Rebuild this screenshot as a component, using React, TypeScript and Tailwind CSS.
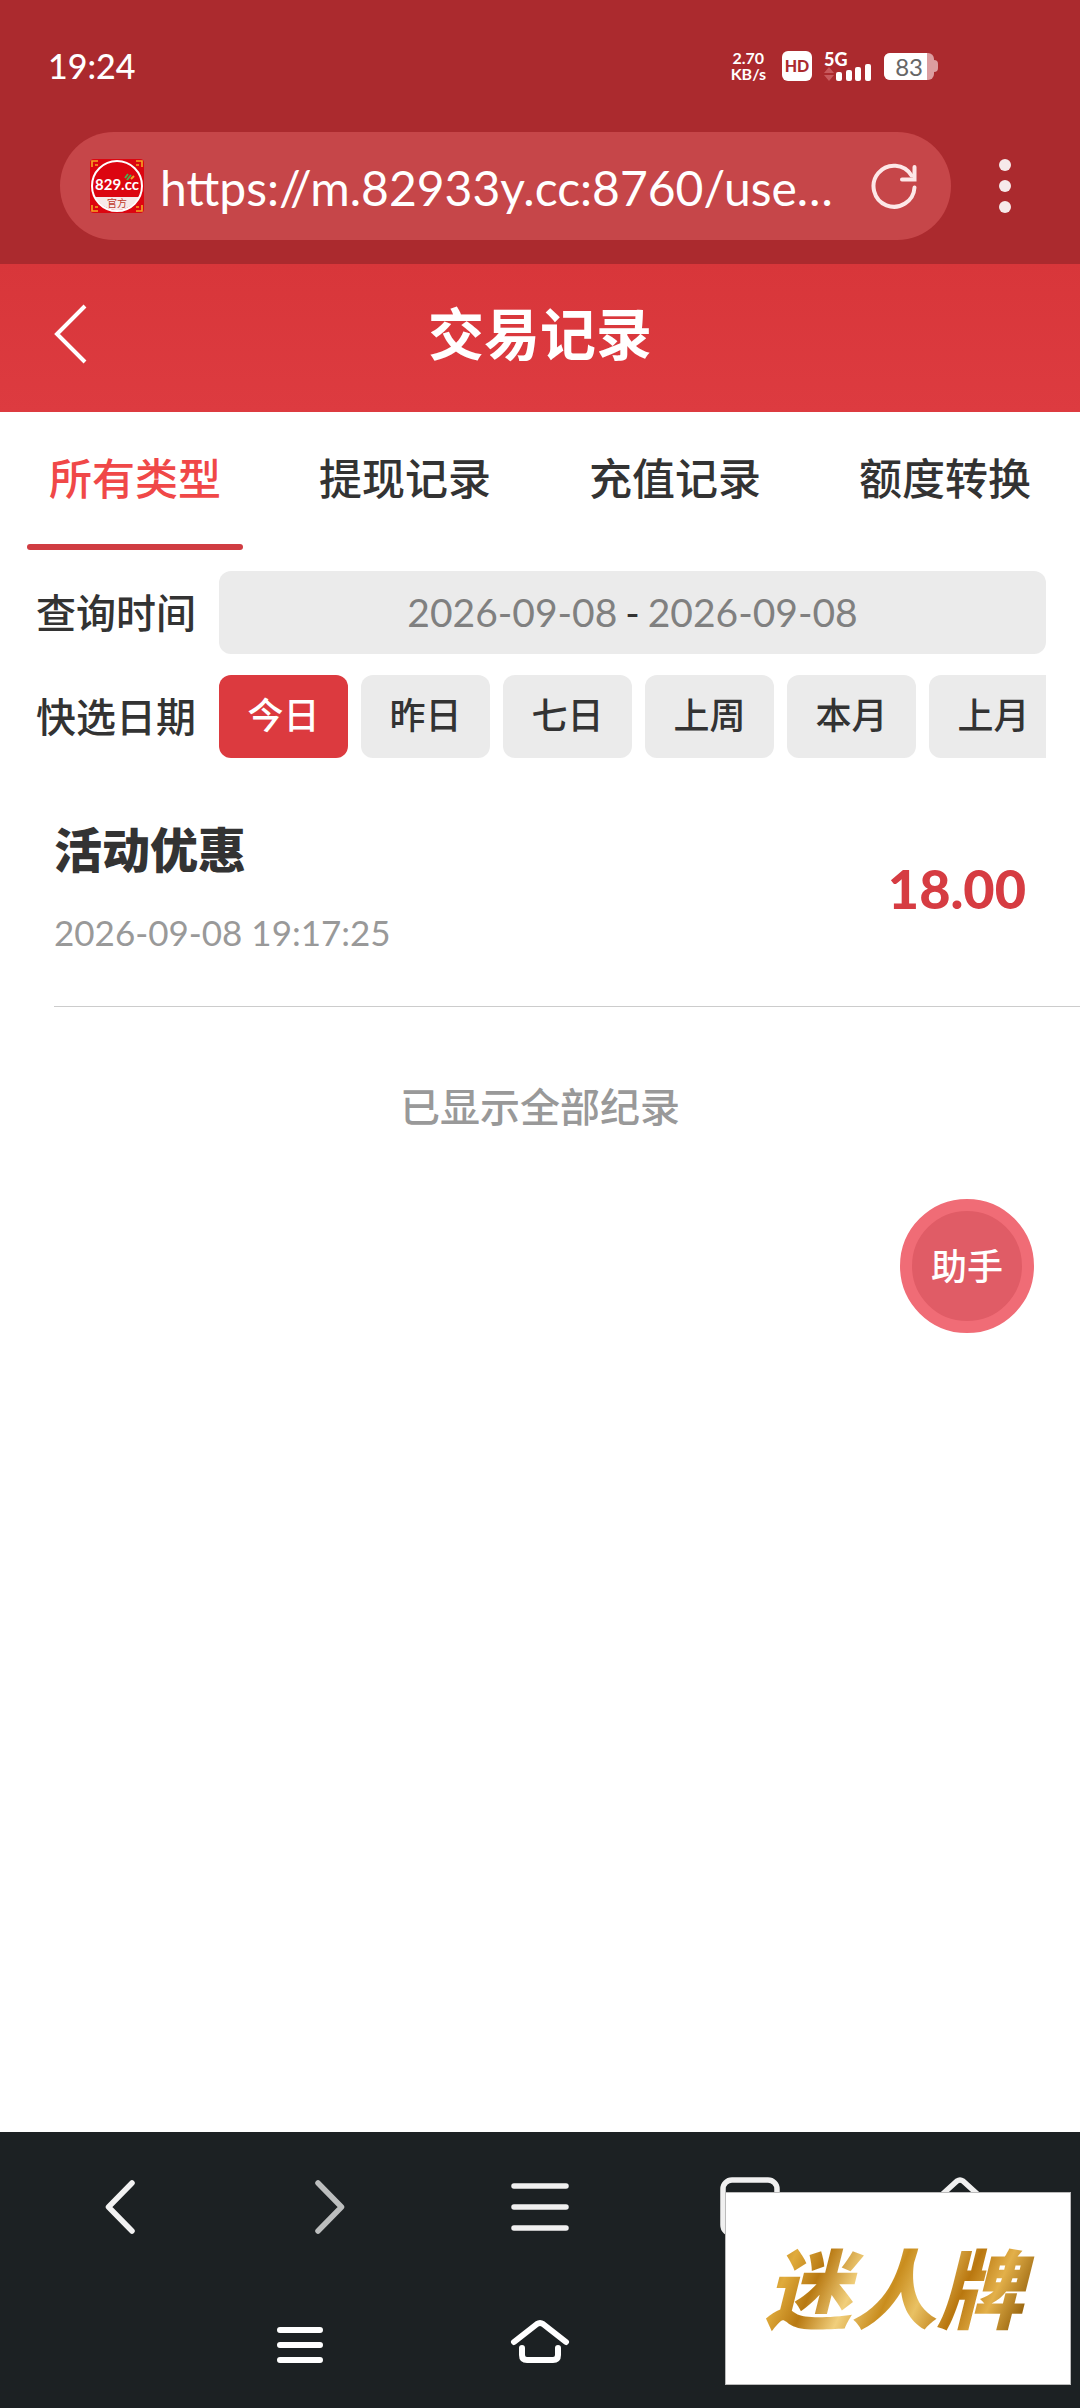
import React, { useState } from "react";

interface TradeRecord {
  id: number;
  title: string;
  time: string;
  amount: string;
}

const typeTabs: string[] = ["所有类型", "提现记录", "充值记录", "额度转换"];

const quickDates: string[] = ["今日", "昨日", "七日", "上周", "本月", "上月"];

const records: TradeRecord[] = [
  { id: 1, title: "活动优惠", time: "2026-09-08 19:17:25", amount: "18.00" },
];

const StatusBar: React.FC = () => (
  <div className="flex h-[132px] items-center justify-between pl-12 pr-[142px] text-white">
    <span className="text-[34px] font-medium leading-10">19:24</span>
    <div className="flex items-center gap-3">
      <div className="text-center text-base font-bold leading-4">
        <div>2.70</div>
        <div>KB/s</div>
      </div>
      <div className="ml-1 flex h-[30px] w-[30px] items-center justify-center rounded-md bg-white text-base font-black text-[#ab2a2e]">
        HD
      </div>
      <div className="relative h-[30px] w-12">
        <span className="absolute left-0 top-0 text-lg font-black leading-4">5G</span>
        <svg className="h-full w-full" viewBox="0 0 48 30" fill="#fff">
          <path d="M5 16l5 6H0zM5 30l5-6H0z" fill="#c8595d" />
          <rect x="12" y="21" width="6" height="9" rx="2" />
          <rect x="22" y="19" width="6" height="11" rx="2" />
          <rect x="31" y="16" width="6" height="14" rx="2" />
          <rect x="41" y="13" width="6" height="17" rx="2" />
        </svg>
      </div>
      <div className="flex items-center">
        <div className="h-[27px] w-[50px] overflow-hidden rounded-md bg-[#dc9da0]">
          <div className="h-full w-[43px] bg-white pr-1 text-right text-2xl leading-7 text-[#666]">83</div>
        </div>
        <div className="h-3 w-1 rounded-r-sm bg-[#dc9da0]" />
      </div>
    </div>
  </div>
);

const SiteIcon: React.FC = () => (
  <svg className="h-[54px] w-[54px] shrink-0" viewBox="0 0 54 54">
    <rect width="54" height="54" rx="4" fill="#dc0510" />
    <g fill="none" stroke="#f5a623" strokeWidth="1.6">
      <path d="M2 8V2h6M5 6h3M46 2h6v6M46 6h3M2 46v6h6M5 48h3M46 52h6v-6M46 48h3" />
    </g>
    <circle cx="27" cy="27" r="25" fill="#dc0510" />
    <path d="M5 38h44a25 25 0 0 1-44 0z" fill="#f7e9e9" />
    <circle cx="27" cy="27" r="25" fill="none" stroke="#fff" strokeWidth="2" />
    <path d="M35 19l3-4M37 21l4-5" stroke="#4caf50" strokeWidth="2" />
    <path d="M41 20l3-3" stroke="#f5a623" strokeWidth="2" />
    <text x="27" y="31" fontSize="15" fontWeight="700" fill="#fff" textAnchor="middle">829.cc</text>
    <text x="27" y="48" fontSize="10" fill="#c0392b" textAnchor="middle">官方</text>
  </svg>
);

const AddressBar: React.FC = () => (
  <div className="flex items-start pb-6 pl-[60px] pr-[57px]">
    <div className="flex h-[108px] min-w-0 flex-1 items-center rounded-full bg-[#c64649] pl-[30px] pr-[34px]">
      <SiteIcon />
      <input
        type="text"
        aria-label="网址"
        readOnly
        value="https://m.82933y.cc:8760/use…"
        className="ml-4 min-w-0 flex-1 bg-transparent pt-1 text-[48px] leading-[60px] text-white outline-none"
      />
      <button type="button" aria-label="刷新" className="ml-6">
        <svg className="h-[46px] w-[46px]" viewBox="0 0 46 46" fill="none" stroke="#fde8e8" strokeWidth="4" strokeLinecap="round">
          <path d="M43.500 24.500A20.500 20.500 0 1 1 40.500 12.500" />
          <path d="M43.500 4V16.500H31" />
        </svg>
      </button>
    </div>
    <button type="button" aria-label="更多" className="ml-9 flex h-[108px] w-9 flex-col items-center justify-center gap-[9px]">
      <span className="h-3 w-3 rounded-full bg-[#f6eaea]" />
      <span className="h-3 w-3 rounded-full bg-[#f6eaea]" />
      <span className="h-3 w-3 rounded-full bg-[#f6eaea]" />
    </button>
  </div>
);

const BrowserFooter: React.FC = () => (
  <footer className="relative bg-[#1c2123]">
    <nav className="grid h-[150px] grid-cols-5 px-[15px]">
      <button type="button" aria-label="后退" className="flex items-center justify-center">
        <svg className="h-[60px] w-[60px]" viewBox="0 0 60 60" fill="none" stroke="#f2f2f2" strokeWidth="5.500" strokeLinecap="round" strokeLinejoin="round">
          <path d="M42 6L18.500 30L42 54" />
        </svg>
      </button>
      <button type="button" aria-label="前进" className="flex items-center justify-center">
        <svg className="h-[60px] w-[60px]" viewBox="0 0 60 60" fill="none" stroke="#bcbebe" strokeWidth="5.500" strokeLinecap="round" strokeLinejoin="round">
          <path d="M18 6L41.500 30L18 54" />
        </svg>
      </button>
      <button type="button" aria-label="菜单" className="flex items-center justify-center">
        <svg className="h-[60px] w-[60px]" viewBox="0 0 60 60" stroke="#f0f0f0" strokeWidth="5.500" strokeLinecap="round">
          <path d="M4 9H56M4 30H56M4 51H56" />
        </svg>
      </button>
      <button type="button" aria-label="标签页" className="flex items-center justify-center">
        <svg className="h-[60px] w-[60px]" viewBox="0 0 60 60" fill="none" stroke="#f0f0f0" strokeWidth="5.500">
          <rect x="3" y="3" width="54" height="54" rx="9" />
        </svg>
      </button>
      <button type="button" aria-label="主页" className="flex items-center justify-center">
        <svg className="h-[60px] w-[60px]" viewBox="0 0 60 60" fill="none" stroke="#f0f0f0" strokeWidth="5.500" strokeLinecap="round" strokeLinejoin="round">
          <path d="M5 24L27 4Q30 2 33 4L55 24M10 22V56H50V22" />
        </svg>
      </button>
    </nav>
    <div className="flex h-[126px] items-center justify-center gap-[180px]">
      <button type="button" aria-label="最近任务">
        <svg className="h-[60px] w-[60px]" viewBox="0 0 60 60" stroke="#fff" strokeWidth="6" strokeLinecap="round">
          <path d="M10 15H50M10 30H50M10 45H50" />
        </svg>
      </button>
      <button type="button" aria-label="桌面">
        <svg className="h-[60px] w-[60px]" viewBox="0 0 60 60" fill="none" stroke="#fff" strokeWidth="6" strokeLinecap="round" strokeLinejoin="round">
          <path d="M4 27L27 9Q30 7 33 9L56 27" />
          <path d="M12 33V40Q12 45 17 45H43Q48 45 48 40V33" />
        </svg>
      </button>
      <button type="button" aria-label="返回桌面">
        <svg className="h-[60px] w-[60px]" viewBox="0 0 60 60" fill="none" stroke="#fff" strokeWidth="6" strokeLinecap="round">
          <path d="M36 12L18 30L36 48" />
        </svg>
      </button>
    </div>

    <div className="absolute bottom-[23px] right-[9px] flex h-[193px] w-[346px] items-center justify-center border border-[#bbb] bg-white">
      <span className="bg-[linear-gradient(115deg,#a86a08_0%,#e0ab3c_14%,#b87912_24%,#f1cf7c_36%,#c98d1e_48%,#e9c163_58%,#b9770f_70%,#e3b04a_80%,#94600a_92%,#c58a20_100%)] bg-clip-text pl-1 pr-3 text-[86px] font-black italic leading-[120px] text-transparent">
        迷人牌
      </span>
    </div>
  </footer>
);

const App: React.FC = () => {
  const [activeTab, setActiveTab] = useState<string>("所有类型");
  const [activeDate, setActiveDate] = useState<string>("今日");

  return (
    <div className="relative flex min-h-screen flex-col bg-white font-['Lato','Noto_Sans_CJK_SC',sans-serif] text-[#333]">
      <div className="bg-[#ab2a2e]">
        <StatusBar />
        <AddressBar />
      </div>

      <header className="grid h-[148px] grid-cols-[1fr_auto_1fr] items-center bg-linear-to-b from-[#d8363a] to-[#dd3b40] px-[50px] pb-2 text-white">
        <button type="button" aria-label="返回" className="justify-self-start">
          <svg className="h-[60px] w-10" viewBox="0 0 40 60" fill="none" stroke="#fff" strokeWidth="4">
            <path d="M35 2L7 30L35 58" />
          </svg>
        </button>
        <h1 className="text-[56px] font-bold leading-[72px]">交易记录</h1>
      </header>

      <main className="flex-1">
        <div className="grid grid-cols-4">
          {typeTabs.map((tab) => (
            <button
              key={tab}
              type="button"
              onClick={() => setActiveTab(tab)}
              className={`relative h-[138px] pb-1 text-[43px] font-medium ${
                activeTab === tab ? "text-[#f04848]" : "text-[#333]"
              }`}
            >
              {tab}
              {activeTab === tab && (
                <span className="absolute inset-x-[10%] bottom-0 h-1.5 rounded-full bg-[#d03c42]" />
              )}
            </button>
          ))}
        </div>

        <div className="mt-[21px] flex flex-col gap-[21px] pl-9 pr-[34px]">
          <div className="flex items-center">
            <span className="w-[183px] shrink-0 text-[40px] font-medium">查询时间</span>
            <div className="flex h-[83px] flex-1 items-center justify-center gap-2 rounded-xl bg-[#ebebeb] text-[39px]">
              <button type="button" className="text-[#808080]">2026-09-08</button>
              <span>-</span>
              <button type="button" className="text-[#808080]">2026-09-08</button>
            </div>
          </div>

          <div className="flex items-center">
            <span className="w-[183px] shrink-0 text-[40px] font-medium">快选日期</span>
            <div className="flex min-w-0 flex-1 gap-[13px] overflow-hidden">
              {quickDates.map((date) => (
                <button
                  key={date}
                  type="button"
                  onClick={() => setActiveDate(date)}
                  className={`h-[83px] w-[129px] shrink-0 rounded-xl pb-1 text-[36px] font-medium ${
                    activeDate === date ? "bg-[#dc3a3f] text-white" : "bg-[#ebebeb] text-[#333]"
                  }`}
                >
                  {date}
                </button>
              ))}
            </div>
          </div>
        </div>

        {records.map((record) => (
          <article
            key={record.id}
            className="ml-[54px] flex items-center justify-between border-b border-[#ccc] pb-[50px] pr-[54px] pt-16"
          >
            <div>
              <h2 className="text-[48px] font-black leading-[56px]">{record.title}</h2>
              <p className="mt-[30px] text-[35px] leading-[48px] text-[#999]">{record.time}</p>
            </div>
            <span className="text-[54px] font-black leading-[64px] text-[#d63c42]">{record.amount}</span>
          </article>
        ))}

        <p className="mt-[72px] text-center text-[40px] font-medium leading-[56px] text-[#999]">已显示全部纪录</p>
      </main>

      <button
        type="button"
        className="absolute right-[46px] top-[1199px] h-[134px] w-[134px] rounded-full border-12 border-[#f06c76] bg-[#e05c66] text-[36px] font-medium text-white"
      >
        助手
      </button>

      <BrowserFooter />
    </div>
  );
};

export default App;
